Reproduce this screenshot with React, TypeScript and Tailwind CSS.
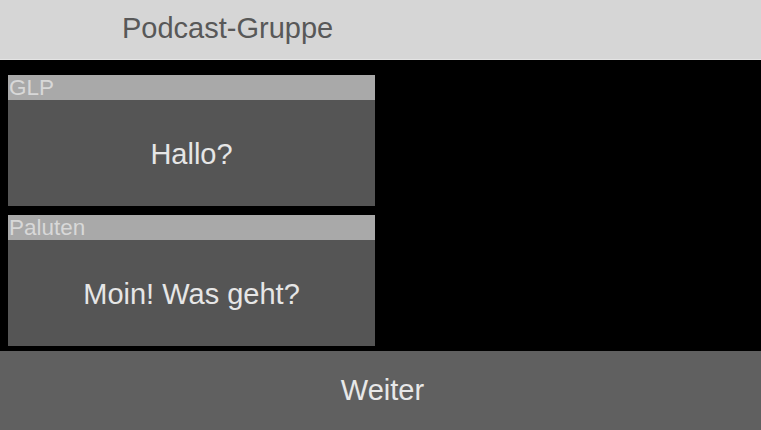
import React from "react";

const font = { fontFamily: '"Liberation Sans", Arial, sans-serif' };

function Card({ name, text }: { name: string; text: string }) {
  return (
    <div className="w-[367px] h-[131px] flex flex-col bg-[#555555]">
      <div className="h-[25px] bg-[#a9a9a9] text-[#d8d8d8] text-[22.5px] leading-[25px] pl-[1px] overflow-hidden">
        {name}
      </div>
      <div className="flex-1 flex items-center justify-center pt-[3px] text-[#e6e6e6] text-[29px]">
        {text}
      </div>
    </div>
  );
}

export default function App() {
  return (
    <div className="w-[761px] h-[430px] flex flex-col overflow-hidden bg-black" style={font}>
      <div className="h-[60px] bg-[#d6d6d6] border-b border-[#e4e4e4] flex items-center pl-[122px] pb-[2px] text-[#585858] text-[29px]">
        Podcast-Gruppe
      </div>
      <div className="flex-1 bg-black pt-[15px] pl-[8px] flex flex-col gap-[9px]">
        <Card name="GLP" text="Hallo?" />
        <Card name="Paluten" text="Moin! Was geht?" />
      </div>
      <div className="h-[79px] bg-[#606060] flex items-center justify-center pl-[4px] text-[#e8e8e8] text-[29px]">
        Weiter
      </div>
    </div>
  );
}
